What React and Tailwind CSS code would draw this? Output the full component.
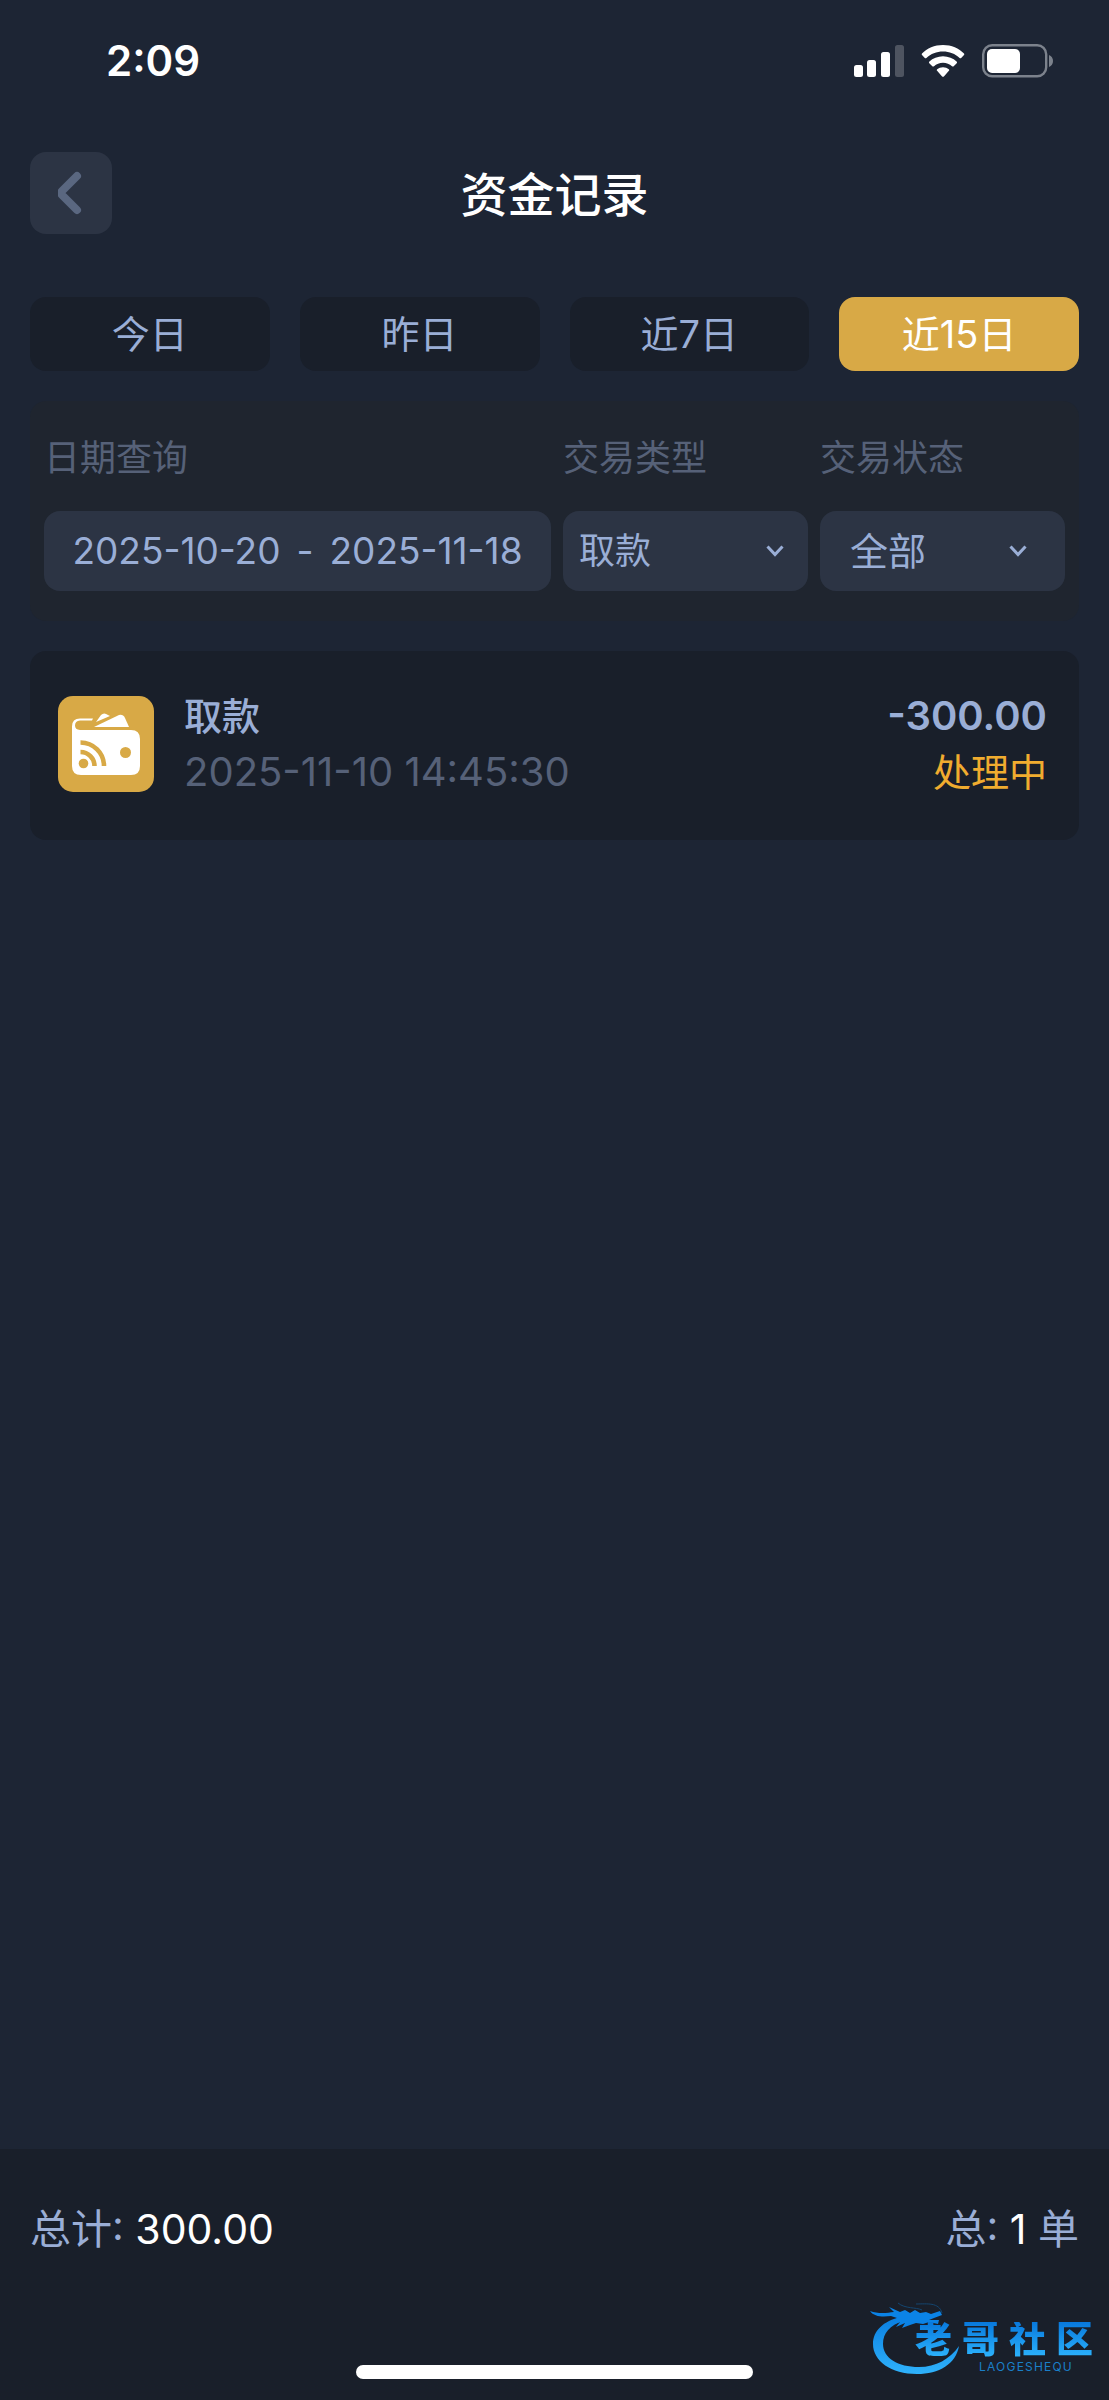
import { useState } from "react";

const RANGES = ["今日", "昨日", "近7日", "近15日"];

const RECORDS = [
  { id: 1, type: "取款", time: "2025-11-10 14:45:30", amount: "-300.00", status: "处理中" },
];

function StatusBar() {
  return (
    <div className="flex h-[122px] items-center justify-between pl-[106px] pr-14">
      <span className="text-[42px] leading-none font-semibold text-white">2:09</span>
      <div className="flex items-center gap-4">
        <svg width="52" height="32" viewBox="0 0 52 32" fill="#fff">
          <rect x="1" y="20" width="9" height="12" rx="2.5" />
          <rect x="14" y="15" width="9" height="17" rx="2.5" />
          <rect x="28" y="7" width="9" height="25" rx="2.5" />
          <rect x="42" y="0" width="9" height="32" rx="2.5" opacity="0.22" />
        </svg>
        <svg width="44" height="32" viewBox="0 0 44 32" fill="#fff">
          <path d="M22 0C30.500 0 38 3.300 43 8.500Q43.700 9.300 43 10L40.200 13Q39.400 13.700 38.600 13C34.200 8.900 28.500 6.600 22 6.600S9.800 8.900 5.400 13Q4.600 13.700 3.800 13L1 10Q.300 9.300 1 8.500C6 3.300 13.500 0 22 0Z" />
          <path d="M22 11.300c5.300 0 10.200 2.100 13.600 5.300.6.500.6 1.100.1 1.600l-3 3c-.5.500-1.100.5-1.700 0-2.400-2.100-5.500-3.400-9-3.400s-6.600 1.300-9 3.400c-.6.500-1.200.5-1.700 0l-3-3c-.5-.5-.5-1.100.1-1.600 3.400-3.200 8.300-5.300 13.600-5.300Z" />
          <path d="M22 22.200c2.300 0 4.300.8 5.800 2.100.6.500.6 1 .1 1.500l-5 5.600c-.5.600-1.300.6-1.800 0l-5-5.600c-.5-.5-.5-1 .1-1.500 1.500-1.300 3.500-2.100 5.800-2.100Z" />
        </svg>
        <svg width="72" height="34" viewBox="0 0 72 34" fill="none">
          <rect x="2.200" y="1.200" width="63" height="31" rx="9" stroke="#7c828c" strokeWidth="2.400" />
          <rect x="6" y="5" width="33" height="24" rx="5" fill="#fff" />
          <path d="M68 11c2.500.8 4 3.200 4 6s-1.500 5.200-4 6Z" fill="#7c828c" />
        </svg>
      </div>
    </div>
  );
}

function WalletIcon() {
  return (
    <svg className="shrink-0" width="96" height="96" viewBox="0 0 96 96">
      <rect width="96" height="96" rx="15" fill="#d8a946" />
      <path d="M38 26 43 19Q46 16 50 19L52 20Z" fill="#fff" />
      <path d="M36 31 61 19Q65 18 67 22L71 31Z" fill="#fff" />
      <path
        d="M35 22.500H22Q14 22.500 14 30.500V70Q14 79 23 79H73Q82 79 82 70V43Q82 34 73 34H22Q17 33.500 17 29.500Q17 24.800 22 24.500H34Z"
        fill="#fff"
      />
      <circle cx="67.500" cy="56.500" r="5.500" fill="#d8a946" />
      <circle cx="25.500" cy="67.500" r="4.800" fill="#d8a946" />
      <path d="M22.500 56A14 14 0 0 1 36.500 70" stroke="#d8a946" strokeWidth="4.600" fill="none" />
      <path d="M22.500 46.500A23.500 23.500 0 0 1 46 70" stroke="#d8a946" strokeWidth="4.600" fill="none" />
    </svg>
  );
}

function FilterSelect({ id, label, options, className, chevron }) {
  return (
    <div className="flex min-w-0 flex-col gap-[26px]">
      <label htmlFor={id} className="text-[36px] leading-[54px] text-[#566178]">
        {label}
      </label>
      <div className="relative">
        <select
          id={id}
          className={`h-20 w-full appearance-none rounded-2xl bg-[#2c3444] text-[#9aaed6] outline-none ${className}`}
        >
          {options.map((o) => (
            <option key={o}>{o}</option>
          ))}
        </select>
        <svg
          className={`pointer-events-none absolute top-1/2 -translate-y-1/2 ${chevron}`}
          width="18"
          height="12"
          viewBox="0 0 18 12"
          fill="none"
        >
          <path d="M1.500 1.500 9 9.500 16.500 1.500" stroke="#9aaed6" strokeWidth="3" />
        </svg>
      </div>
    </div>
  );
}

function Watermark() {
  return (
    <div className="absolute right-4 bottom-6 h-[76px] w-[224px]">
      <svg className="absolute inset-0" width="224" height="76" viewBox="0 0 224 76">
        <defs>
          <linearGradient id="dragon" x1="0" y1="0" x2="0" y2="1">
            <stop offset="0" stopColor="#0a7ee0" />
            <stop offset="1" stopColor="#2fb2fb" />
          </linearGradient>
        </defs>
        {/* body */}
        <path
          d="M32 17C14 21 4 31 4 44C4 61 22 74 48 74C70 74 87 64 90 46C81 59 67 67 50 67C29 67 14 58 14 44C14 33 21 25 34 21Z"
          fill="url(#dragon)"
        />
        {/* head, horns and whiskers */}
        <path
          d="M1 11C9 14 18 13 25 12L20 7L31 12L36 10L41 13L46 10L51 13L57 12L62 14L71 11L73 15L65 18L60 20L70 20L69 24L60 22L54 24L47 23L41 25L33 28L36 23L27 27L31 22L22 25L28 18L22 16C14 17 5 17 1 11Z"
          fill="#0b83e6"
        />
        <path d="M29 3C36 9 47 7 53 10M47 4C58 4 70 2 73 13" stroke="#14456f" strokeWidth="1" fill="none" />
      </svg>
      <div className="relative flex flex-col items-end pt-[22px]">
        <span className="flex gap-[10px] bg-linear-to-b from-[#0878dc] to-[#2db4fd] bg-clip-text text-[37px] leading-[36px] font-black text-transparent">
          <span>老</span>
          <span>哥</span>
          <span>社</span>
          <span>区</span>
        </span>
        <span className="pt-[3px] pr-5 text-[12px] leading-[12px] tracking-widest text-[#1a7fc9]">LAOGESHEQU</span>
      </div>
    </div>
  );
}

export default function App() {
  const [range, setRange] = useState("近15日");

  return (
    <div className="flex min-h-screen flex-col bg-[#1d2534] font-['Inter','Noto_Sans_CJK_SC',sans-serif]">
      <StatusBar />

      <header className="grid grid-cols-[82px_1fr_82px] items-center px-[30px] pt-[30px]">
        <button aria-label="返回" className="flex size-[82px] items-center justify-center rounded-2xl bg-[#2c3444]">
          <svg width="26" height="46" viewBox="0 0 26 46" fill="none">
            <path
              d="M19 6 4.500 20.500Q2 23 4.500 25.500L19 40"
              stroke="#5a6780"
              strokeWidth="8"
              strokeLinecap="round"
              strokeLinejoin="round"
            />
          </svg>
        </button>
        <h1 className="pt-1 text-center text-[47px] leading-[70px] font-medium text-white">资金记录</h1>
      </header>

      <main className="flex flex-1 flex-col px-[30px] pt-[63px]">
        <div className="grid grid-cols-4 gap-[30px]">
          {RANGES.map((r) => (
            <button
              key={r}
              onClick={() => setRange(r)}
              className={`h-[74px] rounded-2xl text-[38px] leading-[56px] ${
                r === range ? "bg-[#d8a946] text-white" : "bg-[#191f2a] text-[#9aaed6]"
              }`}
            >
              {r}
            </button>
          ))}
        </div>

        <section className="mt-[30px] grid grid-cols-[507fr_245fr_245fr] gap-3 rounded-2xl bg-[#1f252f] px-[14px] pt-[30px] pb-[30px]">
          <div className="flex min-w-0 flex-col gap-[26px]">
            <label htmlFor="dates" className="text-[36px] leading-[54px] text-[#566178]">
              日期查询
            </label>
            <button
              id="dates"
              className="flex h-20 items-center justify-center gap-4 rounded-2xl bg-[#2c3444] text-[37px] whitespace-nowrap text-[#9aaed6]"
            >
              <span>2025-10-20</span>
              <span>-</span>
              <span>2025-11-18</span>
            </button>
          </div>
          <FilterSelect
            id="type"
            label="交易类型"
            options={["取款", "存款", "转账"]}
            className="pl-4 text-[36px]"
            chevron="right-6"
          />
          <FilterSelect
            id="state"
            label="交易状态"
            options={["全部", "处理中", "成功", "失败"]}
            className="pl-[30px] text-[38px]"
            chevron="right-[38px]"
          />
        </section>

        <ul className="mt-[30px]">
          {RECORDS.map((rec) => (
            <li key={rec.id} className="flex h-[189px] items-center rounded-2xl bg-[#191f2a] px-7 pb-1">
              <WalletIcon />
              <div className="ml-[30px] flex-1">
                <p className="text-[38px] leading-[56px] font-medium text-[#9aaed6]">{rec.type}</p>
                <p className="text-[40px] leading-[56px] text-[#566178]">{rec.time}</p>
              </div>
              <div className="pr-1 text-right">
                <p className="text-[40px] leading-[56px] font-semibold text-[#9aaed6]">{rec.amount}</p>
                <p className="text-[38px] leading-[56px] text-[#f0ac2f]">{rec.status}</p>
              </div>
            </li>
          ))}
        </ul>
      </main>

      <footer className="relative flex flex-col bg-[#191f2a] pt-[50px] pb-[21px]">
        <div className="flex justify-between px-[30px] text-[41px] leading-[60px] text-[#9aaed6]">
          <p>
            总计: <span className="text-white">300.00</span>
          </p>
          <p>
            总: <span className="text-white">1</span> 单
          </p>
        </div>
        <div className="mt-[106px] h-[14px] w-[397px] self-center rounded-full bg-white" />
        <Watermark />
      </footer>
    </div>
  );
}
